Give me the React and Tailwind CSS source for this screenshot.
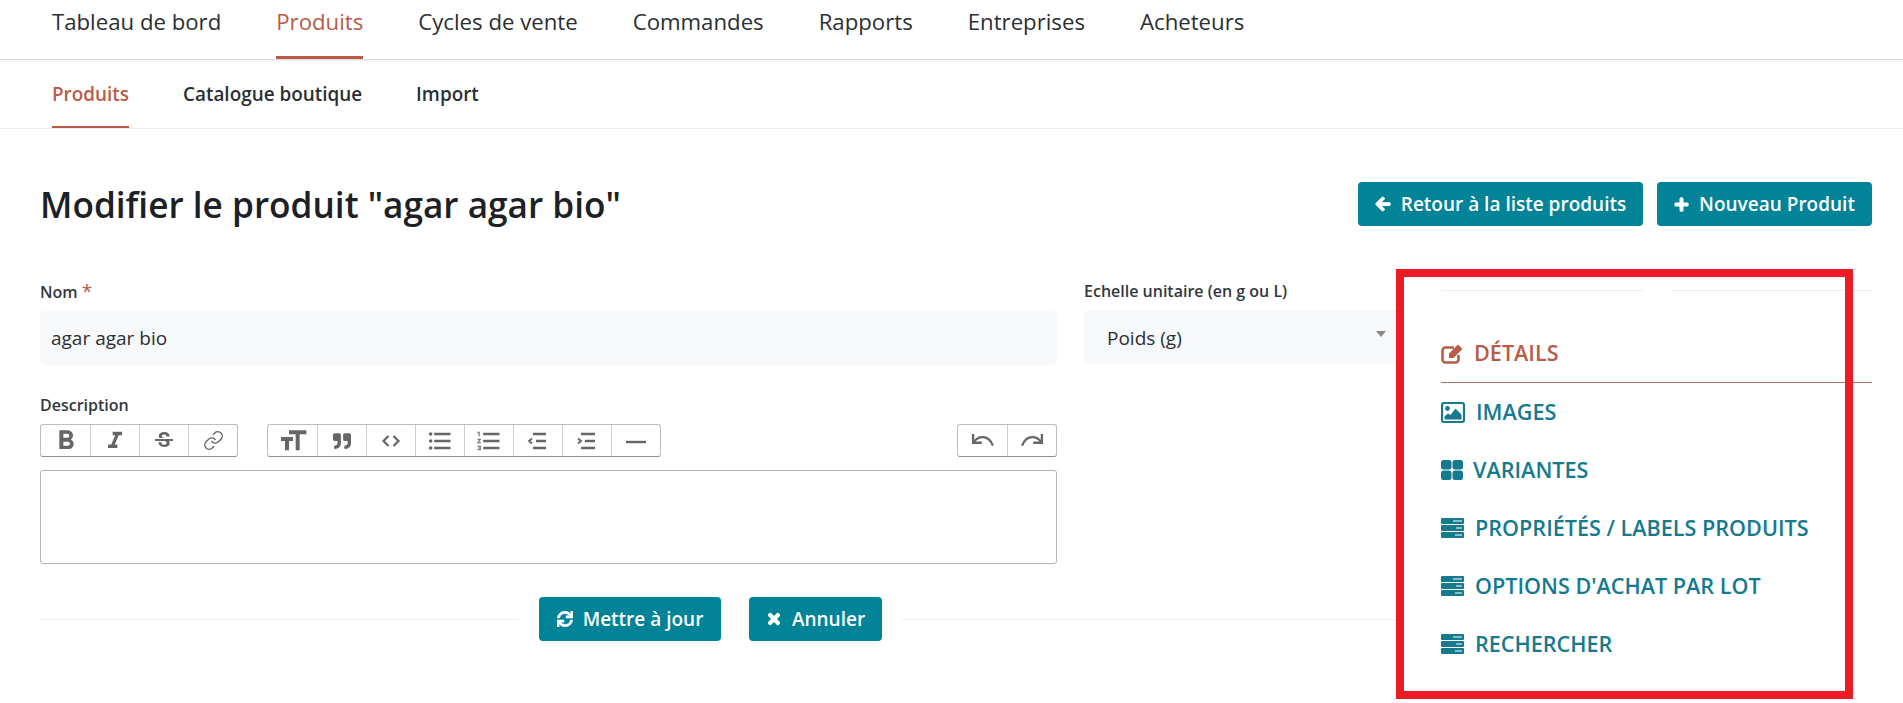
import { FaArrowLeft, FaPlus, FaSync, FaTimes, FaQuoteRight } from "react-icons/fa";
import { MdFormatBold, MdFormatItalic, MdStrikethroughS, MdFormatSize, MdFormatListBulleted, MdFormatListNumbered } from "react-icons/md";
import { Link } from "lucide-react";

const mainNav = ["Tableau de bord", "Produits", "Cycles de vente", "Commandes", "Rapports", "Entreprises", "Acheteurs"];
const subNav = ["Produits", "Catalogue boutique", "Import"];

const CodeIcon = () => (
    <svg viewBox="0 0 24 24" className="w-6 h-6" fill="none" stroke="currentColor" strokeWidth="2.2">
        <path d="M9.5 7 4.5 12l5 5M14.5 7l5 5-5 5" />
    </svg>
);

const OutdentIcon = () => (
    <svg viewBox="0 0 24 24" className="w-6 h-6" fill="none" stroke="currentColor">
        <path strokeWidth="2.4" d="M7 5h13M10 12h10M7 19h13" />
        <path strokeWidth="1.8" d="M6 9.5 3 12l3 2.5" />
    </svg>
);

const IndentIcon = () => (
    <svg viewBox="0 0 24 24" className="w-6 h-6" fill="none" stroke="currentColor">
        <path strokeWidth="2.4" d="M6 5h14M10 12h10M6 19h14" />
        <path strokeWidth="1.8" d="m3 9.5 3 2.5-3 2.500" />
    </svg>
);

const RuleIcon = () => (
    <svg viewBox="0 0 24 24" className="w-6 h-6" fill="none" stroke="currentColor" strokeWidth="2.4">
        <path d="M2 13h20" />
    </svg>
);

const UndoIcon = () => (
    <svg viewBox="0 0 24 24" className="w-7 h-7" fill="none" stroke="currentColor" strokeWidth="2">
        <path d="M3.500 6v7.500H11" />
        <path d="M4 13C8 7 17 6.500 20.500 16" />
    </svg>
);

const RedoIcon = () => (
    <svg viewBox="0 0 24 24" className="w-7 h-7" fill="none" stroke="currentColor" strokeWidth="2">
        <path d="M20.500 6v7.500H13" />
        <path d="M20 13C16 7 7 6.500 3.500 16" />
    </svg>
);

const EditIcon = () => (
    <svg viewBox="0 0 23 21" className="w-[23px] h-[21px]" fill="none">
        <path d="M17.5 12v4.5a3 3 0 0 1-3 3H4.5a3 3 0 0 1-3-3v-9a3 3 0 0 1 3-3H13" stroke="currentColor" strokeWidth="2.6" />
        <path d="M8 10.5 17 1.5 l4.5 4.5 -9 9 H8z" fill="currentColor" />
    </svg>
);

const ImageIcon = () => (
    <svg viewBox="0 0 24 21" className="w-[24px] h-[21px]" fill="none">
        <rect x="1" y="1" width="22" height="19" rx="2" stroke="currentColor" strokeWidth="2.2" />
        <circle cx="6.5" cy="6.5" r="2.4" fill="currentColor" />
        <path d="M3.5 17.5v-3l3.500-3 2.500 1.500 5-6.500 6 6v5z" fill="currentColor" />
    </svg>
);

const GridIcon = () => (
    <svg viewBox="0 0 22 20" className="w-[22px] h-[20px]" fill="currentColor">
        <rect x="0" y="0" width="10.5" height="9.500" rx="2.500" />
        <rect x="11.500" y="0" width="10.500" height="9.500" rx="2.500" />
        <rect x="0" y="10.500" width="10.500" height="9.500" rx="2.500" />
        <rect x="11.500" y="10.500" width="10.500" height="9.500" rx="2.500" />
    </svg>
);

const ListBarsIcon = () => (
    <svg viewBox="0 0 23 20" className="w-[23px] h-[20px]">
        <rect x="0" y="0" width="23" height="6" rx="1" fill="currentColor" />
        <rect x="0" y="7" width="23" height="6" rx="1" fill="currentColor" />
        <rect x="0" y="14" width="23" height="6" rx="1" fill="currentColor" />
        <path d="M12 3h9M15 10h6M14 17h7" stroke="white" strokeWidth="1" />
    </svg>
);

const ToolGroup = ({ items }) => (
    <div className="flex h-[33px] border border-[#bdbdbd] border-b-[#8f8f8f] rounded-[3px] text-[#666]">
        {items.map((icon, idx) => (
            <div key={idx} className="w-[49px] flex items-center justify-center border-l border-[#ccc] first:border-l-0">
                {icon}
            </div>
        ))}
    </div>
);

const TealButton = ({ icon, label, className }) => (
    <button className={`h-[44px] flex items-center justify-center gap-[10px] rounded-[4px] bg-[#028397] text-white text-[19px] font-semibold ${className}`}>
        {icon}
        {label}
    </button>
);

const TabLink = ({ icon, label, gap }) => (
    <div className={`h-[58px] flex items-center text-[#167a8e] ${gap}`}>
        {icon}
        <span>{label}</span>
    </div>
);

const App = () => {
    return (
        <div className="relative w-[1903px] h-[703px] overflow-hidden bg-white text-[#2b2f33] font-['Open_Sans',sans-serif]">
            <nav className="h-[60px] flex gap-[55px] pl-[52px] border-b border-[#dcdcdc] shadow-[0_1px_2px_rgba(0,0,0,0.08)] text-[22.200px] font-medium">
                {mainNav.map((item) => (
                    <a key={item} className={`h-[59px] pt-[5px] ${item === "Produits" ? "text-[#b85c48] border-b-[3px] border-[#b85c48]" : ""}`}>{item}</a>
                ))}
            </nav>
            <nav className="h-[69px] flex gap-[54px] pl-[52px] border-b border-[#ececec] text-[18.900px] font-semibold">
                {subNav.map((item, idx) => (
                    <a key={item} className={`h-[68px] pt-[20px] ${idx === 0 ? "text-[#b85c48] border-b-2 border-[#b85c48]" : ""}`}>{item}</a>
                ))}
            </nav>

            <div className="px-[31px] pl-[40px]">
                <div className="flex items-center justify-between h-[44px] mt-[53px]">
                    <h1 className="text-[35.200px] font-semibold text-[#1d2125]">Modifier le produit "agar agar bio"</h1>
                    <div className="flex gap-[14px]">
                        <TealButton className="w-[285px]" icon={<FaArrowLeft className="w-[16px] h-[16px]" stroke="currentColor" strokeWidth={40} />} label="Retour à la liste produits" />
                        <TealButton className="w-[215px]" icon={<FaPlus className="w-[15px] h-[15px]" stroke="currentColor" strokeWidth={40} />} label="Nouveau Produit" />
                    </div>
                </div>

                <div className="flex mt-[54px]">
                    <div className="w-[1364px]">
                        <div className="flex gap-[27px]">
                            <div className="w-[1017px]">
                                <label className="block text-[16px] leading-[22px] font-semibold text-[#33383d]">Nom <span className="text-[#b85c48] text-[19px] font-medium">*</span></label>
                                <div className="mt-[8px] h-[54px] flex items-center px-[11px] bg-[#f7f8fa] rounded-[5px] text-[19px]">agar agar bio</div>
                            </div>
                            <div className="w-[320px]">
                                <label className="block text-[16px] leading-[22px] font-semibold text-[#33383d]">Echelle unitaire (en g ou L)</label>
                                <div className="mt-[8px] h-[54px] flex items-center justify-between pl-[23px] pr-[18px] bg-[#f7f8fa] rounded-[5px] text-[19px]">
                                    <span className="pt-[2px]">Poids (g)</span>
                                    <span className="mb-[6px] w-0 h-0 border-x-[5px] border-x-transparent border-t-[6px] border-t-[#888]"></span>
                                </div>
                            </div>
                        </div>

                        <div className="w-[1017px] mt-[29px]">
                            <label className="block text-[16px] leading-[22px] font-semibold text-[#33383d]">Description</label>
                            <div className="flex mt-[8px]">
                                <ToolGroup items={[
                                    <MdFormatBold className="w-8 h-8" />,
                                    <MdFormatItalic className="w-7 h-7" />,
                                    <MdStrikethroughS className="w-6 h-6" />,
                                    <Link className="w-[21px] h-[21px]" strokeWidth={1.6} />,
                                ]} />
                                <div className="ml-[29px]">
                                    <ToolGroup items={[
                                        <MdFormatSize className="w-8 h-8" />,
                                        <FaQuoteRight className="w-[18px] h-[18px]" />,
                                        <CodeIcon />,
                                        <MdFormatListBulleted className="w-7 h-7" />,
                                        <MdFormatListNumbered className="w-7 h-7" />,
                                        <OutdentIcon />,
                                        <IndentIcon />,
                                        <RuleIcon />,
                                    ]} />
                                </div>
                                <div className="ml-auto">
                                    <ToolGroup items={[
                                        <UndoIcon />,
                                        <RedoIcon />,
                                    ]} />
                                </div>
                            </div>
                            <div className="mt-[13px] h-[94px] border border-[#b5b5b5] rounded-[3px]"></div>
                        </div>

                        <div className="flex items-center mt-[33px]">
                            <div className="w-[479px] border-t border-[#efefef]"></div>
                            <div className="flex gap-[28px] mx-[20px]">
                                <TealButton className="w-[182px]" icon={<FaSync className="w-[16px] h-[16px]" stroke="currentColor" strokeWidth={20} />} label="Mettre à jour" />
                                <TealButton className="w-[133px]" icon={<FaTimes className="w-[16px] h-[16px]" stroke="currentColor" strokeWidth={40} />} label="Annuler" />
                            </div>
                            <div className="flex-1 border-t border-[#efefef]"></div>
                        </div>
                    </div>

                    <aside className="ml-[37px] w-[431px] mt-[10px] text-[21.600px] font-semibold">
                        <div className="flex gap-[28px]">
                            <div className="flex-1 border-t border-[#ececec]"></div>
                            <div className="flex-1 border-t border-[#ececec]"></div>
                        </div>
                        <div className="mt-[34px] h-[58px] flex items-center gap-[10px] text-[#b85c48] border-b border-[#b0715f]">
                            <EditIcon />
                            <span>DÉTAILS</span>
                        </div>
                        <TabLink gap="gap-[11px]" icon={<ImageIcon />} label="IMAGES" />
                        <TabLink gap="gap-[10px]" icon={<GridIcon />} label="VARIANTES" />
                        <TabLink gap="gap-[11px]" icon={<ListBarsIcon />} label="PROPRIÉTÉS / LABELS PRODUITS" />
                        <TabLink gap="gap-[11px]" icon={<ListBarsIcon />} label="OPTIONS D'ACHAT PAR LOT" />
                        <TabLink gap="gap-[11px]" icon={<ListBarsIcon />} label="RECHERCHER" />
                    </aside>
                </div>
            </div>

            {/* annotation drawn over the page */}
            <div className="absolute left-[1396px] top-[269px] w-[457px] h-[430px] border-[8px] border-[#ed1c24]"></div>
        </div>
    );
};

export default App;
